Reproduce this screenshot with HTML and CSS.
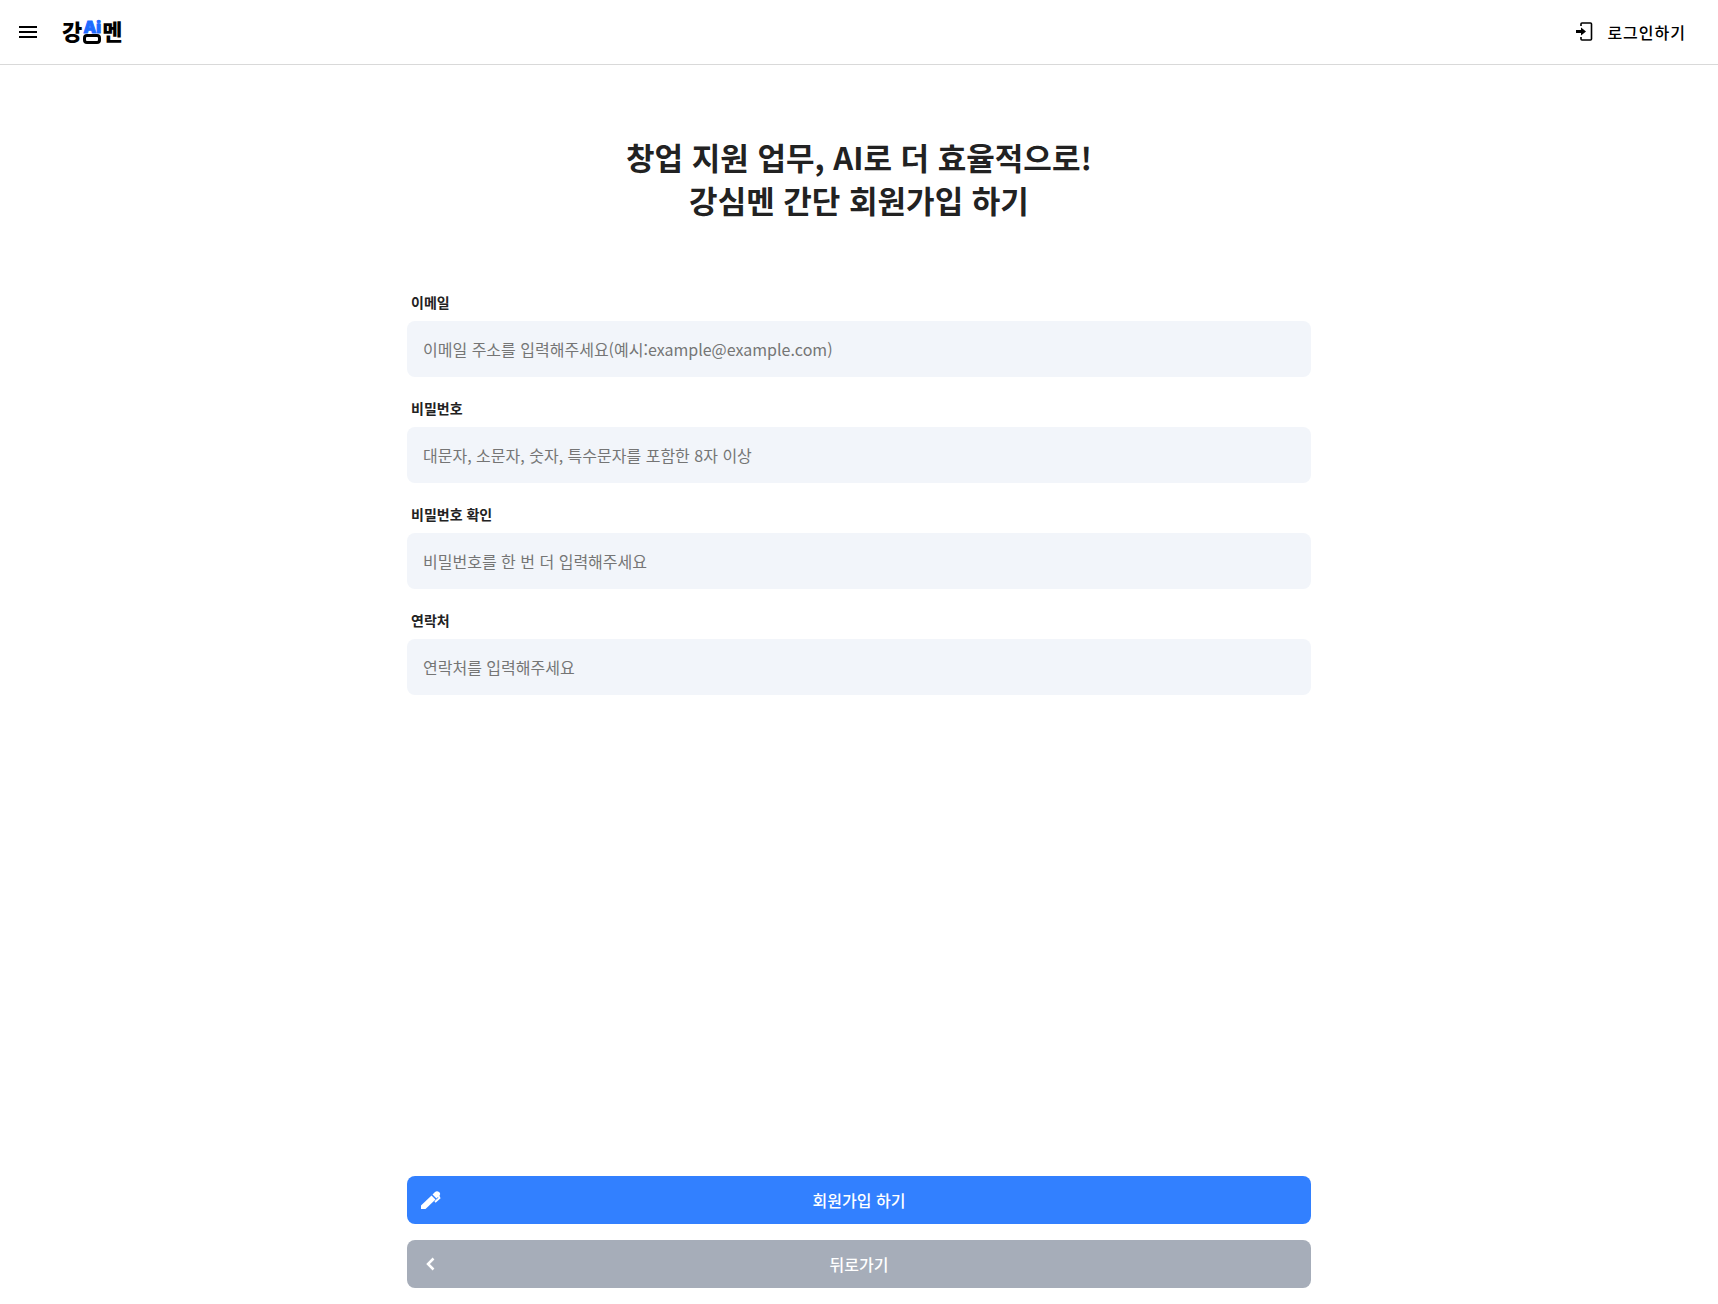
FILE: index.html
```html
<!DOCTYPE html>
<html lang="ko">
<head>
    <meta charset="UTF-8">
    <meta name="viewport" content="width=device-width, initial-scale=1.0">
    <title>강심멘 - 회원가입</title>
    <link rel="stylesheet" href="styles.css">
</head>
<body>
    <header class="header">
        <button type="button" class="menu-button" aria-label="메뉴">
            <svg width="24" height="24" viewBox="0 0 24 24" fill="currentColor"><path d="M3 18h18v-2H3v2zm0-5h18v-2H3v2zm0-7v2h18V6H3z"/></svg>
        </button>
        <a href="#" class="logo" aria-label="강심멘">
            <span class="logo-text">강</span>
            <span class="logo-mid"><span class="logo-ai">Ai</span><span class="logo-base"></span></span>
            <span class="logo-text">멘</span>
        </a>
        <a href="#" class="login-link">
            <svg width="18" height="20" viewBox="0 0 18 20" fill="none"><path d="M6 4V2q0-1 1-1h8.500q1 0 1 1v15q0 1-1 1H7q-1 0-1-1v-2" stroke="currentColor" stroke-width="1.600"/><path d="M1 8h5V5.500L11 9.500 6 13.500V11H1z" fill="currentColor"/></svg>
            로그인하기
        </a>
    </header>

    <main class="container">
        <h1>창업 지원 업무, AI로 더 효율적으로!<br>강심멘 간단 회원가입 하기</h1>

        <form class="signup-form">
            <div class="field">
                <label for="email">이메일</label>
                <input type="email" id="email" name="email" placeholder="이메일 주소를 입력해주세요(예시:example@example.com)">
            </div>
            <div class="field">
                <label for="password">비밀번호</label>
                <input type="password" id="password" name="password" placeholder="대문자, 소문자, 숫자, 특수문자를 포함한 8자 이상">
            </div>
            <div class="field">
                <label for="passwordCheck">비밀번호 확인</label>
                <input type="password" id="passwordCheck" name="passwordCheck" placeholder="비밀번호를 한 번 더 입력해주세요">
            </div>
            <div class="field">
                <label for="phone">연락처</label>
                <input type="tel" id="phone" name="phone" placeholder="연락처를 입력해주세요">
            </div>

            <div class="actions">
                <button type="submit" class="btn btn-primary">
                    <svg width="24" height="24" viewBox="0 0 24 24" fill="currentColor"><path d="M2 21v-3.500L12.500 7.500l4 4L6.500 21z"/><path d="M13.500 6.500L16 4q2-1.500 4 0t.5 3.500L17.500 10.500z"/><path d="M19.500 8l1 2-4.500 4" fill="none" stroke="currentColor" stroke-width="1.800"/></svg>
                    <span>회원가입 하기</span>
                </button>
                <button type="button" class="btn btn-back">
                    <svg width="24" height="24" viewBox="0 0 24 24" fill="none" stroke="currentColor" stroke-width="2.500"><path d="M14.500 6.500L9 12l5.500 5.500"/></svg>
                    <span>뒤로가기</span>
                </button>
            </div>
        </form>
    </main>
</body>
</html>
```
FILE: styles.css
```css
* {
    box-sizing: border-box;
}

body {
    display: flex;
    flex-direction: column;
    min-height: 100vh;
    margin: 0;
    font-family: "Noto Sans CJK KR", "Noto Sans", sans-serif;
    color: #222;
    background-color: #fff;
}

button,
input {
    font-family: inherit;
    font-size: 16px;
    border: none;
}

button {
    cursor: pointer;
}

a {
    color: #000;
    text-decoration: none;
}

svg {
    display: block;
    flex: none;
}

.header {
    display: flex;
    align-items: center;
    height: 65px;
    padding: 0 32px 0 16px;
    border-bottom: 1px solid #d9d9d9;
}

.menu-button {
    padding: 0;
    color: #000;
    background: none;
}

.logo {
    display: flex;
    align-items: center;
    gap: 1px;
    margin-left: 22px;
    font-weight: 900;
}

.logo-text {
    padding-bottom: 4px;
    font-size: 22px;
    line-height: 24px;
}

.logo-mid {
    display: flex;
    flex-direction: column;
    align-items: center;
    gap: 1px;
}

.logo-ai {
    color: #1f6bff;
    font-family: Inter, sans-serif;
    font-size: 16px;
    line-height: 12px;
    -webkit-text-stroke: 1px currentColor;
}

.logo-base {
    width: 18px;
    height: 10px;
    border: 3px solid #000;
    border-radius: 4px;
}

.login-link {
    display: flex;
    align-items: center;
    gap: 14px;
    margin-left: auto;
    font-size: 16px;
    font-weight: 500;
    letter-spacing: 1px;
}

.container {
    display: flex;
    flex-direction: column;
    flex: 1;
    width: 100%;
    max-width: 936px;
    margin: 0 auto;
    padding: 70px 16px 16px;
}

h1 {
    margin: 0 0 71px;
    font-size: 31px;
    font-weight: 700;
    line-height: 43px;
    text-align: center;
}

.signup-form {
    display: flex;
    flex-direction: column;
    flex: 1;
    gap: 21px;
}

.field {
    display: flex;
    flex-direction: column;
    gap: 9px;
}

.field label {
    padding-left: 4px;
    font-size: 14px;
    font-weight: 700;
    line-height: 20px;
}

.field input {
    width: 100%;
    height: 56px;
    padding: 0 16px;
    border-radius: 8px;
    background-color: #f2f5fa;
}

.field input::placeholder {
    color: #757575;
}

.actions {
    display: flex;
    flex-direction: column;
    gap: 16px;
    margin-top: auto;
}

.btn {
    display: grid;
    grid-template-columns: 24px 1fr 24px;
    align-items: center;
    height: 48px;
    padding: 0 12px;
    border-radius: 8px;
    color: #fff;
    font-weight: 500;
}

.btn-primary {
    background-color: #3280ff;
}

.btn-back {
    background-color: #a6adb9;
}
```
